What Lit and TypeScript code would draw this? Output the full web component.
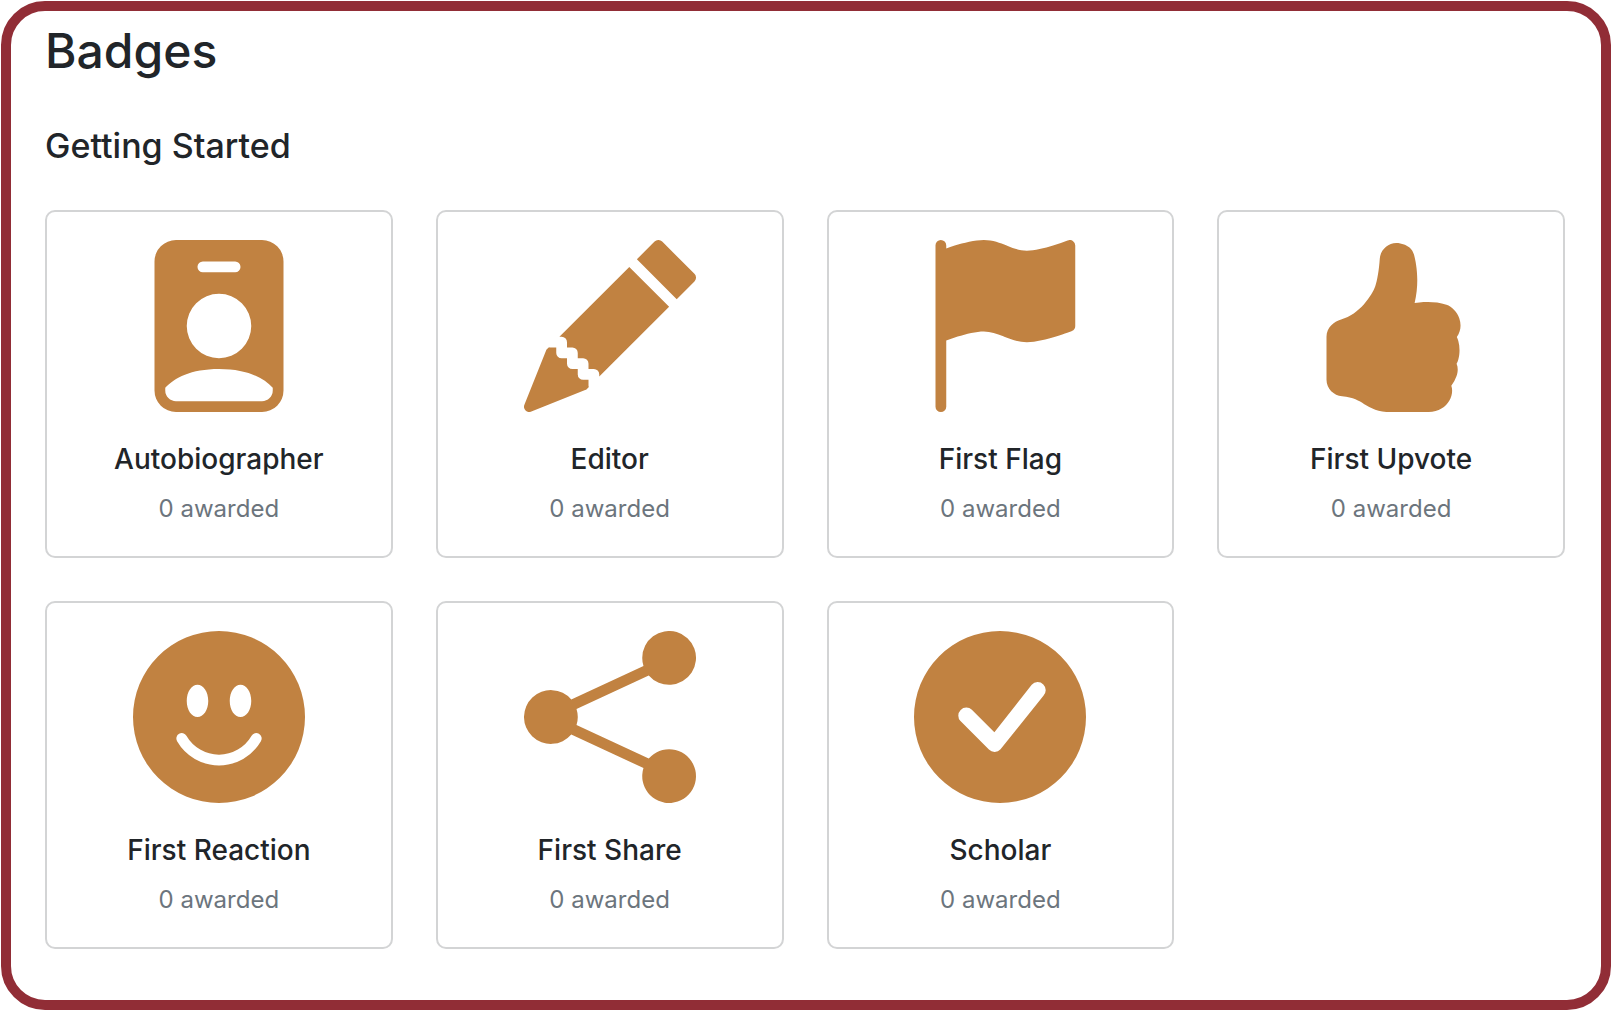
import { LitElement, html, css } from "lit";
import { customElement, property } from "lit/decorators.js";

interface Badge {
  name: string;
  awarded: number;
  icon: string;
}

const BADGES: Badge[] = [
  {
    name: "Autobiographer",
    awarded: 0,
    icon: "M2 2a2 2 0 0 1 2-2h8a2 2 0 0 1 2 2v12a2 2 0 0 1-2 2H4a2 2 0 0 1-2-2V2zm4.5 0a.5.5 0 0 0 0 1h3a.5.5 0 0 0 0-1h-3zM8 11a3 3 0 1 0 0-6 3 3 0 0 0 0 6zm5 2.755C12.146 12.825 10.623 12 8 12s-4.146.826-5 1.755V14a1 1 0 0 0 1 1h8a1 1 0 0 0 1-1v-.245z",
  },
  {
    name: "Editor",
    awarded: 0,
    icon: "M12.854.146a.5.5 0 0 0-.707 0L10.5 1.793 14.207 5.5l1.647-1.646a.5.5 0 0 0 0-.708l-3-3zm.646 6.061L9.793 2.5 3.293 9H3.5a.5.5 0 0 1 .5.5v.5h.5a.5.5 0 0 1 .5.5v.5h.5a.5.5 0 0 1 .5.5v.5h.5a.5.5 0 0 1 .5.5v.207l6.5-6.5zm-7.468 7.468A.5.5 0 0 1 6 13.5V13h-.5a.5.5 0 0 1-.5-.5V12h-.5a.5.5 0 0 1-.5-.5V11h-.5a.5.5 0 0 1-.5-.5V10h-.5a.499.499 0 0 1-.175-.032l-.179.178a.5.5 0 0 0-.11.168l-2 5a.5.5 0 0 0 .65.65l5-2a.5.5 0 0 0 .168-.11l.178-.178z",
  },
  {
    name: "First Flag",
    awarded: 0,
    icon: "M14.778.085A.5.5 0 0 1 15 .5V8a.5.5 0 0 1-.314.464L14.5 8l.186.464-.003.001-.006.003-.023.009a12.435 12.435 0 0 1-.397.15c-.264.095-.631.223-1.047.35-.816.252-1.879.523-2.71.523-.847 0-1.548-.28-2.158-.525l-.028-.01C7.68 8.71 7.14 8.5 6.5 8.5c-.7 0-1.638.23-2.437.477A19.626 19.626 0 0 0 3 9.342V15.5a.5.5 0 0 1-1 0V.5a.5.5 0 0 1 1 0v.282c.226-.079.496-.17.79-.26C4.606.272 5.67 0 6.5 0c.84 0 1.524.277 2.121.519l.043.018C9.286.788 9.828 1 10.5 1c.7 0 1.638-.23 2.437-.477a19.587 19.587 0 0 0 1.349-.476l.019-.007.004-.002h.001a.5.5 0 0 1 .468.047z",
  },
  {
    name: "First Upvote",
    awarded: 0,
    icon: "M6.956 1.745C7.021.81 7.908.087 8.864.325l.261.066c.463.116.874.456 1.012.965.22.816.533 2.511.062 4.51a9.84 9.84 0 0 1 .443-.051c.713-.065 1.669-.072 2.516.21.518.173.994.681 1.2 1.273.184.532.16 1.162-.234 1.733.058.119.103.242.138.363.077.27.113.567.113.856 0 .289-.036.586-.113.856-.039.135-.09.273-.16.404.169.387.107.819-.003 1.148a3.163 3.163 0 0 1-.488.901c.054.152.076.312.076.465 0 .305-.089.625-.253.912C13.1 15.522 12.437 16 11.5 16H8c-.605 0-1.07-.081-1.466-.218a4.82 4.82 0 0 1-.97-.484l-.048-.03c-.504-.307-.999-.609-2.068-.722C2.682 14.464 2 13.846 2 13V9c0-.85.685-1.432 1.357-1.615.849-.232 1.574-.787 2.132-1.41.56-.627.914-1.28 1.039-1.639.199-.575.356-1.539.428-2.59z",
  },
  {
    name: "First Reaction",
    awarded: 0,
    icon: "M8 16A8 8 0 1 0 8 0a8 8 0 0 0 0 16zM7 6.5C7 7.328 6.552 8 6 8s-1-.672-1-1.5S5.448 5 6 5s1 .672 1 1.5zM4.285 9.567a.5.5 0 0 1 .683.183A3.498 3.498 0 0 0 8 11.5a3.498 3.498 0 0 0 3.032-1.75.5.5 0 1 1 .866.5A4.498 4.498 0 0 1 8 12.5a4.498 4.498 0 0 1-3.898-2.25.5.5 0 0 1 .183-.683zM10 8c-.552 0-1-.672-1-1.5S9.448 5 10 5s1 .672 1 1.5S10.552 8 10 8z",
  },
  {
    name: "First Share",
    awarded: 0,
    icon: "M11 2.5a2.5 2.5 0 1 1 .603 1.628l-6.718 3.12a2.499 2.499 0 0 1 0 1.504l6.718 3.12a2.5 2.5 0 1 1-.488.876l-6.718-3.12a2.5 2.5 0 1 1 0-3.256l6.718-3.12A2.5 2.5 0 0 1 11 2.5z",
  },
  {
    name: "Scholar",
    awarded: 0,
    icon: "M16 8A8 8 0 1 1 0 8a8 8 0 0 1 16 0zm-3.97-3.03a.75.75 0 0 0-1.08.022L7.477 9.417 5.384 7.323a.75.75 0 0 0-1.06 1.06L6.97 11.03a.75.75 0 0 0 1.079-.02l3.992-4.99a.75.75 0 0 0-.01-1.05z",
  },
];

@customElement("badge-card")
export class BadgeCard extends LitElement {
  @property({ attribute: false }) badge!: Badge;

  static styles = css`
    :host {
      display: block;
    }
    .card {
      box-sizing: border-box;
      height: 100%;
      display: flex;
      flex-direction: column;
      align-items: center;
      padding: 28px;
      border: 2px solid #d3d4d5;
      border-radius: 10px;
      text-align: center;
    }
    .icon {
      display: block;
      width: 172px;
      height: 172px;
      fill: #c18241;
    }
    .name {
      margin: 30px 0 0;
      font-size: 28px;
      line-height: 34px;
      font-weight: 500;
    }
    .count {
      margin: 14px 0 0;
      font-size: 24px;
      line-height: 38px;
      color: #6c757d;
    }
  `;

  render() {
    return html`
      <article class="card">
        <svg class="icon" viewBox="0 0 16 16" aria-hidden="true">
          <path d=${this.badge.icon}></path>
        </svg>
        <h3 class="name">${this.badge.name}</h3>
        <p class="count">${this.badge.awarded} awarded</p>
      </article>
    `;
  }
}

@customElement("app-root")
export class AppRoot extends LitElement {
  static styles = css`
    :host {
      display: block;
      box-sizing: border-box;
      min-height: 100vh;
      padding: 1px 0 0 1px;
      background: #fff;
      color: #212529;
      font-family: Inter, "Liberation Sans", sans-serif;
    }
    .page {
      box-sizing: border-box;
      min-height: calc(100vh - 1px);
      padding: 10px 36px 40px 34px;
      border: 10px solid #912d36;
      border-radius: 44px;
    }
    .title {
      margin: 0;
      font-size: 48px;
      line-height: 60px;
      font-weight: 500;
    }
    .subtitle {
      margin: 43px 0;
      font-size: 34px;
      line-height: 43px;
      font-weight: 500;
    }
    .grid {
      display: grid;
      grid-template-columns: repeat(auto-fill, minmax(320px, 1fr));
      gap: 43px;
      margin: 0;
      padding: 0;
      list-style: none;
    }
  `;

  render() {
    return html`
      <main class="page">
        <h1 class="title">Badges</h1>
        <section>
          <h2 class="subtitle">Getting Started</h2>
          <ul class="grid">
            ${BADGES.map(
              (badge) => html`<li><badge-card .badge=${badge}></badge-card></li>`,
            )}
          </ul>
        </section>
      </main>
    `;
  }
}
